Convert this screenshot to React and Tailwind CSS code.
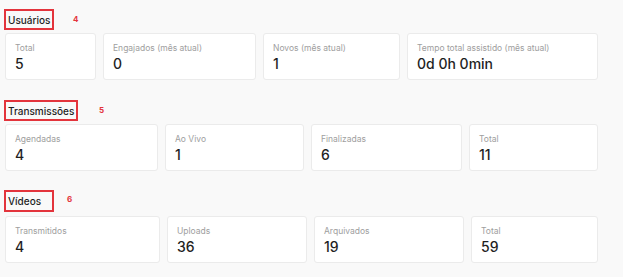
import React from "react";

const sections = [
  {
    title: "Usuários",
    tag: "4",
    boxW: "w-[50px] h-[21px]",
    sec: "gap-[3px]",
    tagMl: "ml-[19px]",
    tagMt: "mt-[-2px]",
    cards: [
      { label: "Total", value: "5", w: "w-[91px]" },
      { label: "Engajados (mês atual)", value: "0", w: "w-[153px]" },
      { label: "Novos (mês atual)", value: "1", w: "w-[137px]" },
      { label: "Tempo total assistido (mês atual)", value: "0d 0h 0min", w: "w-[191px]" },
    ],
  },
  {
    title: "Transmissões",
    tag: "5",
    boxW: "w-[74px] h-[21px]",
    sec: "gap-[3px]",
    tagMl: "ml-[21px]",
    tagMt: "mt-[-2px]",
    cards: [
      { label: "Agendadas", value: "4", w: "w-[153px]" },
      { label: "Ao Vivo", value: "1", w: "w-[139px]" },
      { label: "Finalizadas", value: "6", w: "w-[151px]" },
      { label: "Total", value: "11", w: "w-[129px]" },
    ],
  },
  {
    title: "Vídeos",
    tag: "6",
    boxW: "w-[50px] h-[22px]",
    sec: "gap-[4px] -mt-[1px]",
    tagMl: "ml-[13px]",
    tagMt: "mt-[-5px]",
    cards: [
      { label: "Transmitidos", value: "4", w: "w-[155px]" },
      { label: "Uploads", value: "36", w: "w-[140px]" },
      { label: "Arquivados", value: "19", w: "w-[150px]" },
      { label: "Total", value: "59", w: "w-[127px]" },
    ],
  },
];

const StatCard = ({ label, value, w }) => (
  <div className={`${w} h-[47px] flex-none bg-white border border-[#ebebeb] rounded-[3px] pl-[9px] pt-[8px]`}>
    <p className="text-[8.5px] leading-[12px] text-[#9e9e9e]">{label}</p>
    <p className="text-[14px] leading-[18px] font-medium text-[#1f1f1f] mt-[1px]">{value}</p>
  </div>
);

export default function App() {
  return (
    <div
      className="w-[623px] h-[277px] bg-[#f9f9f9] pl-[5px] pt-[9px] flex flex-col gap-[20px]"
      style={{ fontFamily: "Inter, 'Noto Sans', sans-serif" }}
    >
      {sections.map((s) => (
        <section key={s.title} className={`flex flex-col ${s.sec}`}>
          <div className="flex items-center">
            <div
              className={`${s.boxW} -ml-[1px] border-2 border-solid border-[#e3343c] flex items-center pl-[2px] overflow-visible`}
            >
              <h2 className="text-[10px] font-medium text-[#1f1f1f] leading-none whitespace-nowrap">
                {s.title}
              </h2>
            </div>
            <span className={`${s.tagMl} ${s.tagMt} text-[8px] font-bold text-[#e3343c] leading-none`}>
              {s.tag}
            </span>
          </div>
          <div className="flex gap-[7px]">
            {s.cards.map((c) => (
              <StatCard key={c.label} {...c} />
            ))}
          </div>
        </section>
      ))}
    </div>
  );
}
